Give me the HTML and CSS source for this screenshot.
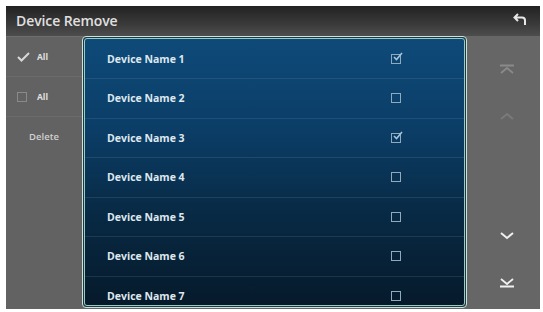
FILE: index.html
```html
<!DOCTYPE html>
<html>
<head>
<meta charset="utf-8">
<link rel="stylesheet" href="styles.css">
</head>
<body>
<div class="screen">
  <div class="header">
    <span class="title">Device Remove</span>
    <svg class="back" width="14" height="13" viewBox="0 0 14 13"><path d="M5 1 L1.5 4.5 L5 8 M1.5 4.5 H9 Q12 4.5 12 7.5 V12" fill="none" stroke="#e8e8e8" stroke-width="2"/></svg>
  </div>
  <div class="main">
    <div class="side">
      <div class="side-item">
        <svg width="13" height="10" viewBox="0 0 13 10"><path d="M1 5 L4.5 8.5 L12 1" fill="none" stroke="#d8d8d8" stroke-width="2"/></svg>
        <span>All</span>
      </div>
      <div class="side-item">
        <span class="sbox"></span>
        <span>All</span>
      </div>
      <div class="side-item delete"><span>Delete</span></div>
    </div>
    <div class="list">
      <div class="inner">
        <div class="row"><span>Device Name 1</span><span class="cb checked"><svg width="11" height="10" viewBox="0 0 11 10"><path d="M2 5 L4.5 7.5 L10 1" fill="none" stroke="#a9c2d6" stroke-width="1.6"/></svg></span></div>
        <div class="row"><span>Device Name 2</span><span class="cb"></span></div>
        <div class="row"><span>Device Name 3</span><span class="cb checked"><svg width="11" height="10" viewBox="0 0 11 10"><path d="M2 5 L4.5 7.5 L10 1" fill="none" stroke="#a9c2d6" stroke-width="1.6"/></svg></span></div>
        <div class="row"><span>Device Name 4</span><span class="cb"></span></div>
        <div class="row"><span>Device Name 5</span><span class="cb"></span></div>
        <div class="row"><span>Device Name 6</span><span class="cb"></span></div>
        <div class="row"><span>Device Name 7</span><span class="cb"></span></div>
      </div>
    </div>
    <div class="nav">
      <div class="nav-top">
        <svg width="16" height="10" viewBox="0 0 16 10"><path d="M1 1.5 H15 M2 9 L8 4 L14 9" fill="none" stroke="#8a8a8a" stroke-width="1.8"/></svg>
        <svg width="16" height="8" viewBox="0 0 16 8"><path d="M2 7 L8 2 L14 7" fill="none" stroke="#7a7a7a" stroke-width="2"/></svg>
      </div>
      <div class="nav-bottom">
        <svg width="16" height="8" viewBox="0 0 16 8"><path d="M2 1 L8 6 L14 1" fill="none" stroke="#f0f0f0" stroke-width="2"/></svg>
        <svg width="16" height="10" viewBox="0 0 16 10"><path d="M2 1 L8 6 L14 1 M1 8.5 H15" fill="none" stroke="#f0f0f0" stroke-width="1.8"/></svg>
      </div>
    </div>
  </div>
</div>
</body>
</html>
```

FILE: styles.css
```css
html, body {
  margin: 0;
  padding: 0;
  background: #ffffff;
}
body {
  width: 543px;
  height: 312px;
  overflow: hidden;
  font-family: "Open Sans", "Liberation Sans", sans-serif;
}
.screen {
  margin: 6px 0 0 6px;
  width: 534px;
  height: 303px;
  background: #666666;
  display: flex;
  flex-direction: column;
  overflow: hidden;
}
.header {
  height: 30px;
  flex: none;
  display: flex;
  align-items: center;
  justify-content: space-between;
  padding: 0 13px 0 10px;
  background: linear-gradient(to bottom, #222222 0%, #3a3a3a 60%, #4d4d4d 100%);
}
.title {
  color: #e0e0e0;
  font-size: 14px;
  font-weight: 600;
  letter-spacing: -0.1px;
  margin-top: -2px;
}
.back {
  margin-top: -4px;
}
.main {
  flex: 1;
  display: flex;
  min-height: 0;
}
.side {
  width: 76px;
  flex: none;
  display: flex;
  flex-direction: column;
  background: #626262;
  border-top: 1px solid #6e6e6e;
}
.side-item {
  height: 39px;
  display: flex;
  align-items: center;
  gap: 7px;
  padding-left: 11px;
  color: #e0e0e0;
  font-size: 8.5px;
  font-weight: 700;
  border-bottom: 1px solid #6b6b6b;
}
.side-item.delete {
  justify-content: center;
  padding-left: 0;
  border-bottom: none;
  color: #d0d0d0;
  font-size: 9.5px;
  font-weight: 600;
}
.sbox {
  width: 8px;
  height: 8px;
  border: 1px solid #8a8a8a;
  margin-right: 3px;
}
.list {
  width: 385px;
  flex: none;
  border: 1px solid #c9e4dc;
  padding: 1px;
  margin-bottom: 1px;
  background: #1f3a3f;
  box-sizing: border-box;
  border-radius: 4px;
}
.inner {
  height: 100%;
  border: 1px solid #9cc9c4;
  box-sizing: border-box;
  border-radius: 3px;
  background: linear-gradient(to bottom, #0e4a79 0%, #0b3d66 35%, #082a45 65%, #061a2b 100%);
  display: flex;
  flex-direction: column;
  overflow: hidden;
}
.row {
  height: 39.5px;
  flex: none;
  display: flex;
  align-items: center;
  justify-content: space-between;
  padding: 0 63px 0 22px;
  color: #dfe8ee;
  font-size: 10.5px;
  font-weight: 700;
  border-bottom: 1px solid rgba(120, 160, 190, 0.18);
  box-sizing: border-box;
}
.row:first-child {
  height: 40px;
}
.cb {
  width: 8px;
  height: 8px;
  border: 1px solid #8fa9bd;
  position: relative;
}
.cb svg {
  position: absolute;
  left: 0;
  top: -3px;
}
.nav {
  flex: 1;
  display: flex;
  flex-direction: column;
  justify-content: space-between;
  align-items: center;
  padding: 28px 0 21px 6px;
}
.nav-top, .nav-bottom {
  display: flex;
  flex-direction: column;
  align-items: center;
}
.nav-top {
  gap: 38px;
}
.nav-bottom {
  gap: 38px;
}
```
